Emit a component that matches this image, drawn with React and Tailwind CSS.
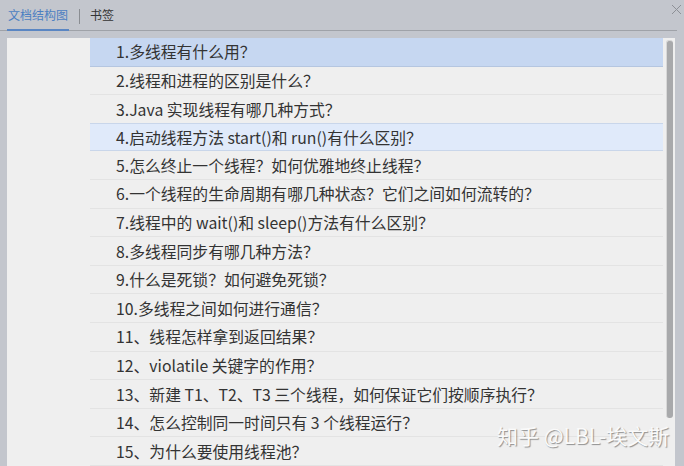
import React from "react";

const items = [
  "1.多线程有什么用？",
  "2.线程和进程的区别是什么？",
  "3.Java 实现线程有哪几种方式？",
  "4.启动线程方法 start()和 run()有什么区别？",
  "5.怎么终止一个线程？如何优雅地终止线程？",
  "6.一个线程的生命周期有哪几种状态？它们之间如何流转的？",
  "7.线程中的 wait()和 sleep()方法有什么区别？",
  "8.多线程同步有哪几种方法？",
  "9.什么是死锁？如何避免死锁？",
  "10.多线程之间如何进行通信？",
  "11、线程怎样拿到返回结果？",
  "12、violatile 关键字的作用？",
  "13、新建 T1、T2、T3 三个线程，如何保证它们按顺序执行？",
  "14、怎么控制同一时间只有 3 个线程运行？",
  "15、为什么要使用线程池？",
];

const font = {
  fontFamily: '"Noto Sans CJK SC", "Noto Sans", "Liberation Sans", sans-serif',
};

export default function App() {
  return (
    <div
      className="w-[684px] h-[466px] bg-[#c3c6cd] overflow-hidden relative"
      style={font}
    >
      {/* header */}
      <div className="h-[31px] mr-[7px] border-b border-[#9fa2a8] flex items-end relative">
        <div className="ml-[7px] h-[31px] flex items-center border-b-2 border-[#5a86c3] -mb-[1px] px-[1px] text-[12px] text-[#4c7fc2] leading-none">
          文档结构图
        </div>
        <div className="self-center w-px h-[15px] bg-[#8a8d92] ml-[10px] mt-[2px]" />
        <div className="h-[31px] flex items-center ml-[10px] text-[12px] text-[#333] leading-none">
          书签
        </div>
      </div>
      <svg
        className="absolute left-[671px] top-[4px]"
        width="11"
        height="11"
        viewBox="0 0 11 11"
      >
        <path d="M1 1L10 10M10 1L1 10" stroke="#8d9096" strokeWidth="1" />
      </svg>

      {/* panel */}
      <div className="mt-[7px] ml-[7px] w-[668px] h-[440px] bg-[#efefef] flex">
        <div className="w-[83px] shrink-0" />
        <div className="flex-1 flex flex-col">
          {items.map((t, i) => (
            <div
              key={i}
              className={
                "h-[28.6px] shrink-0 flex items-center pl-[26px] pt-[1px] text-[15.8px] text-[#333] whitespace-nowrap border-b " +
                (i === 0
                  ? "bg-[#c6d7f1] border-[#b5c6e0]"
                  : i === 3
                  ? "bg-[#e0eafa] border-[#c9d6ea] border-t -mt-px"
                  : "border-[#e3e3e3]")
              }
            >
              {t}
            </div>
          ))}
        </div>
        <div className="w-[12px] shrink-0 flex justify-center pt-[2px]">
          <div className="w-[7px] h-[378px] bg-[#a8a9ab] rounded-t-[3px] rounded-b-[3px] border-t border-l border-[#d8d8d8]" />
        </div>
      </div>

      {/* watermark */}
      <div
        className="absolute left-[497px] top-[425px] text-[21px] text-[#fafafa] leading-none whitespace-nowrap"
        style={{ textShadow: "1px 1px 1px rgba(0,0,0,0.4)" }}
      >
        知乎 @LBL-埃文斯
      </div>
    </div>
  );
}
